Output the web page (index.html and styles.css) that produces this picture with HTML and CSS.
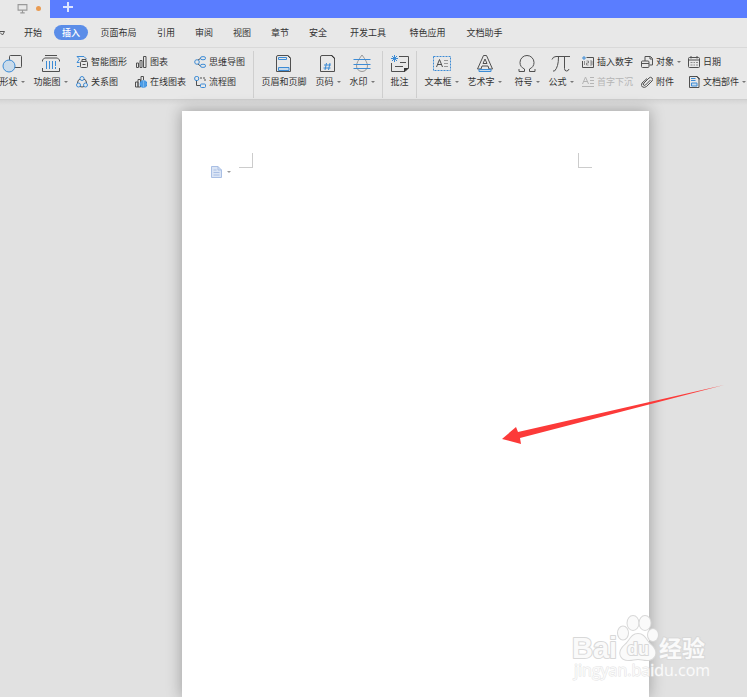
FILE: index.html
```html
<!DOCTYPE html>
<html lang="zh-CN">
<head>
<meta charset="utf-8">
<title>文档</title>
<meta name="viewport" content="width=device-width, initial-scale=1">
<link rel="stylesheet" href="styles.css">
</head>
<body>
<div class="app">
  <header class="titlebar">
    <div class="tab">
      <svg class="tab-icon" viewBox="0 0 10 10"><path class="k" d="M1 1.5h8v5H1zM5 6.5v2M3 9h4"/></svg>
      <span class="unsaved"></span>
    </div>
    <button class="new-tab" aria-label="新建"><svg viewBox="0 0 10 10"><path d="M5 0v10M0 5h10"/></svg></button>
  </header>

  <nav class="menu">
    <button class="menu-more" aria-label="更多"><svg viewBox="0 0 6 6"><path d="M0 1.500h4.500L2.500 5 0 2.500"/></svg></button>
    <a href="#">开始</a>
    <a href="#" class="active"><span>插入</span></a>
    <a href="#" class="long">页面布局</a>
    <a href="#">引用</a>
    <a href="#">审阅</a>
    <a href="#">视图</a>
    <a href="#">章节</a>
    <a href="#">安全</a>
    <a href="#" class="wide">开发工具</a>
    <a href="#" class="long">特色应用</a>
    <a href="#" class="long">文档助手</a>
  </nav>

  <div class="ribbon">
    <button class="big two">
      <svg viewBox="0 0 20 20"><rect class="k" x="7.500" y="1.500" width="12" height="12" rx="1"/><circle class="b tint" cx="7" cy="12" r="6"/></svg>
      <span class="label caret">形状</span>
    </button>
    <button class="big three">
      <svg viewBox="0 0 20 20"><path class="k" d="M4 1.500h12M1.500 7.500V6l2-2h13l2 2v1.500M1.500 14v3.500h17V14"/><path class="b" d="M5.500 7v8M8.500 7v8M11.500 7v8M14.500 7v5M14.500 13v2"/></svg>
      <span class="label caret">功能图</span>
    </button>
    <div class="grid">
      <button class="small"><svg viewBox="0 0 12 12"><path class="b" d="M1 .500h7l2.500 2.500M1 .500 3.500 3 1 6.500h2.500M1 10.500h2.500"/><rect class="k" x="4.500" y="5.500" width="7" height="6" rx="1"/><path class="k" d="M6 5V3.500h4V5M6.500 8.500h3"/></svg>智能图形</button>
      <button class="small"><svg viewBox="0 0 12 12"><path class="k" d="M1.500 7h2v4.500h-2zM5 4.500h2v7H5zM8.500 .500h2.500v11H8.500z"/></svg>图表</button>
      <button class="small"><svg viewBox="0 0 12 12"><path class="k" d="M4 4 6.500 2.500M4 8l2.500 2"/><circle class="b" cx="3" cy="6" r="2.300"/><rect class="b" x="6.500" y=".700" width="5" height="3" rx="1.500"/><rect class="b" x="6.500" y="8.300" width="5" height="3" rx="1.500"/></svg>思维导图</button>
      <button class="small"><svg viewBox="0 0 12 12"><path class="k" d="M4 3Q1.500 4 1.500 7M8 3q2.500 1 2.500 4M4 10.500q2 1 4 0"/><circle class="b" cx="6" cy="2.500" r="2"/><circle class="b" cx="2.500" cy="9" r="2"/><circle class="b" cx="9.500" cy="9" r="2"/></svg>关系图</button>
      <button class="small"><svg viewBox="0 0 12 12"><path class="k" d="M.500 6h2.500v5H.500zM3 3.500h2.500V11H3zM6 5V.500h2.500V4"/><circle class="solid" cx="8.500" cy="8" r="3.800"/><path class="light" d="M5 8h7M8.500 4.500v7M6 6h5M6 10h5"/></svg>在线图表</button>
      <button class="small"><svg viewBox="0 0 12 12"><path class="k dash" d="M6 2h5v4"/><path class="k" d="M2.500 4v5.500H6"/><rect class="b" x=".700" y=".500" width="4" height="4" rx="1.500"/><rect class="b" x="6.500" y="8" width="5" height="3.500" rx="1"/></svg>流程图</button>
    </div>
    <span class="sep"></span>
    <button class="big five">
      <svg viewBox="0 0 20 20"><path class="k" d="M2.500 3q0-1.500 1.500-1.500h9.500l3 3v13h-14z"/><path class="dark" d="M13 1h1l3 3v1z"/><path class="b" d="M4.500 3.500h8v2h-8z"/><path class="b tint" d="M4.500 13.500h10.500v3H4.500z"/></svg>
      <span class="label">页眉和页脚</span>
    </button>
    <button class="big two">
      <svg viewBox="0 0 20 20"><path class="k" d="M2.500 3q0-1.500 1.500-1.500h9.500l3 3v13h-14z"/><path class="dark" d="M12.500 1H14l3 3v1.500z"/><path class="b" d="m8.500 9-1.500 7M12 9l-1.500 7M6 11h7M5.500 14h7"/></svg>
      <span class="label caret">页码</span>
    </button>
    <button class="big two">
      <svg viewBox="0 0 20 20"><path class="g" d="M10 1Q4.500 8 4.500 12a5.500 5.500 0 0 0 11 0Q15.500 8 10 1z"/><path class="b" d="M1.500 5.500h17M1.500 10.500h17M1.500 14.500h17"/></svg>
      <span class="label caret">水印</span>
    </button>
    <span class="sep"></span>
    <button class="big">
      <svg viewBox="0 0 20 20"><path class="k" d="M9 2.500h9.500V14l-3.500 3.500H1.500V9M10 8.500h6M5 12.500h8"/><path class="dark" d="M14 18v-4h5z"/><path class="b" d="M4.500 1v7M1 4.500h7M2 2l5 5M7 2 2 7"/></svg>
      <span class="label">批注</span>
    </button>
    <span class="sep"></span>
    <button class="big three">
      <svg viewBox="0 0 20 20"><rect class="b dash" x="1.500" y="2.500" width="17" height="14"/><path class="k" d="m4.500 13 3-7.500 3 7.500M5.500 10.500h4"/><path class="g" d="M12 6.500h4M12 9.500h4M12 12.500h4"/></svg>
      <span class="label caret">文本框</span>
    </button>
    <button class="big three">
      <svg viewBox="0 0 20 20"><path class="k" d="M8.500 1.500h3L17.500 15h-3.500l-1-3H7l-1 3H2.500zM10 5l-2 4.500h4z"/><path class="b tint" d="M4 15.500h12v2H4z"/></svg>
      <span class="label caret">艺术字</span>
    </button>
    <button class="big two symbol">
      <svg viewBox="0 0 20 20"><path class="k" d="M2 17.500h5.500V15Q3 13 3 8.500a7 7 0 0 1 14 0Q17 13 12.500 15v2.500H18M2 17.500V15M18 17.500V15"/></svg>
      <span class="label caret">符号</span>
    </button>
    <button class="big two">
      <svg viewBox="0 0 20 20"><path class="k" d="M1 5.500Q2 2.500 5 2.500h14M7.500 3q0 10-4 14H2M13.500 3v11.500q0 2.500 2 2.500t2.500-2"/></svg>
      <span class="label caret">公式</span>
    </button>
    <div class="grid last">
      <button class="small"><svg viewBox="0 0 12 12"><path class="k" d="M4.500 1.500h7v10H.500V5"/><path class="b" d="M2 0v4M0 2h4"/><path class="k thin" d="M2.500 5v4M4.500 5h2v2h-2v2h2M8 5h2v4H8M8 7h2"/></svg>插入数字</button>
      <button class="small"><svg viewBox="0 0 12 12"><path class="k" d="M4 5V.500h5.500l2 2V9H8.500M9 1v2h2"/><rect class="k" x=".500" y="5" width="7.500" height="6.500" rx="1"/><path class="k" d="M.500 7.500H8"/></svg><span class="caret">对象</span></button>
      <button class="small"><svg viewBox="0 0 12 12"><rect class="k" x=".500" y="1.500" width="11" height="10" rx="1"/><path class="k" d="M.500 4h11M3 0v2.500M9 0v2.500"/><path class="k thin" d="M2.500 6.500h2M5.500 6.500h1.500M8 6.500h2M2.500 9h2M5.500 9h1.500M8 9h2"/></svg>日期</button>
      <button class="small" disabled><svg viewBox="0 0 12 12"><path class="g" d="m.500 8 3-7 3 7M1.500 5.500h4M8 1.500h4M8 4.500h4M8 7.500h4M0 10.500h12"/></svg>首字下沉</button>
      <button class="small"><svg viewBox="0 0 12 12"><path class="k" d="m9.500 4-5 5q-1.500 1-2 0t.500-2L8 2q1.500-1.500 3 0t0 3l-5.500 5.500q-2 1.500-4 .500t-.500-4L6 2.500"/></svg>附件</button>
      <button class="small"><svg viewBox="0 0 12 12"><path class="k" d="M1.500 .500H9l2 2v9H1.500z"/><path class="dark" d="M8 0h1l2.500 2.500V4z"/><path class="b" d="M3 2.500h4.500M3 4.500h4.500"/><path class="b tint" d="M3.500 7h5.500v3H3.500z"/></svg><span class="caret">文档部件</span></button>
    </div>
  </div>

  <main class="workspace">
    <section class="page">
      <div class="page-top">
        <button class="paste" aria-label="粘贴选项"><svg viewBox="0 0 11 12"><path d="M.500 .500H7l3.500 3.500v7.500H.500z"/><path class="fold" d="M7 .500V4h3.500M2.500 4h3M2.500 6.500h6M2.500 9h6"/></svg></button>
        <span class="mark start"></span>
        <span class="mark end"></span>
      </div>
      <svg class="arrow" viewBox="0 0 222 60"><path d="M0 54 14 42l2 5L222 0 18 53l1 6z"/></svg>
    </section>
    <svg class="watermark" viewBox="0 0 150 80">
      <g class="paw">
        <ellipse cx="54" cy="24" rx="5" ry="6.500"/><ellipse cx="64" cy="14" rx="5.500" ry="7"/><ellipse cx="76" cy="14" rx="5.500" ry="7"/><ellipse cx="84" cy="26" rx="5" ry="6"/>
        <path d="M69 25c7 0 8 7 13 11 8 7 4 15-4 15-4 0-5-1-9-1s-5 1-9 1c-9 0-12-8-4-15 5-4 6-11 13-11z"/>
      </g>
      <text class="logo" x="3" y="49">Bai</text>
      <text class="du" x="58" y="46">du</text>
      <text class="cn" x="90" y="48">经验</text>
      <text class="url" x="5" y="67">jingyan.baidu.com</text>
    </svg>
  </main>
</div>
</body>
</html>
```

FILE: styles.css
```css
* { box-sizing: border-box; }
body {
  margin: 0;
  font: 9px/12px "Noto Sans CJK SC", sans-serif;
  color: #333;
  background: #e1e1e1;
}
button {
  padding: 0;
  border: 0;
  background: none;
  font: inherit;
  color: inherit;
}
svg { display: block; fill: none; }
.app { display: flex; flex-direction: column; min-height: 100vh; overflow: hidden; }

.titlebar { display: flex; height: 18px; background: #5a7dff; }
.tab { display: flex; align-items: center; gap: 8px; width: 50px; padding: 0 0 2px 17px; background: #e8e8e8; }
.tab-icon { width: 11px; height: 11px; }
.tab-icon .k { stroke: #999; }
.unsaved { width: 5px; height: 5px; border-radius: 50%; background: #e99b52; }
.new-tab { padding: 0 13px 4px; }
.new-tab svg { width: 10px; height: 10px; stroke: #dce4ff; stroke-width: 2; }

.menu { display: flex; align-items: center; height: 30px; border-bottom: 1px solid #d9d9d9; background: #e8e8e8; }
.menu-more { width: 14px; }
.menu-more svg { width: 6px; height: 6px; stroke: #555; }
.menu a { width: 38px; color: inherit; text-align: center; text-decoration: none; white-space: nowrap; }
.menu .long { width: 57px; }
.menu .wide { width: 62px; }
.menu .active span { display: block; margin: 0 2px; border-radius: 8px; line-height: 15px; color: #fff; background: #5b8de8; font-weight: 500; }

.ribbon {
  display: flex;
  gap: 8px;
  height: 52px;
  margin-left: -1px;
  padding: 3px 0 1px;
  border-bottom: 1px solid #cfcfcf;
  background: #e8e8e8;
  white-space: nowrap;
}
.ribbon > * { flex: none; }
.big { display: flex; flex-direction: column; align-items: center; gap: 2px; width: 19px; padding-top: 3px; }
.big svg { width: 20px; height: 20px; }
.two { width: 26px; }
.three { width: 35px; }
.five { width: 46px; }
.symbol { margin-left: 4px; }
.sep { width: 1px; margin: 0 -1px; background: #cfcfcf; }
.caret { display: flex; align-items: center; gap: 3px; }
.caret::after { content: ""; border: 2px solid transparent; border-top-color: #777; border-bottom: 0; }
.grid { display: grid; grid-template-columns: repeat(3, 52px); gap: 8px 7px; align-content: start; padding-top: 5px; }
.last { grid-template-columns: 52px 40px 60px; }
.small { display: flex; align-items: center; gap: 3px; }
.small svg { width: 12px; height: 12px; }
.small:disabled { color: #b5b5b5; }

.k { stroke: #505050; }
.b { stroke: #3c8bd5; }
.g { stroke: #999; }
.small:disabled .g { stroke: #b5b5b5; }
.thin { stroke-width: 0.6; }
.dash { stroke-dasharray: 2 1; }
.tint { fill: #c9dbeb; }
.solid { fill: #2f8ae0; }
.light { stroke: #a9d0f5; stroke-width: 0.5; }
.dark { fill: #333; }

.workspace {
  position: relative;
  display: flex;
  flex: 1;
  padding: 11px 98px 0 182px;
  background: linear-gradient(#d5d5d5, #e1e1e1 5px);
}
.page { position: relative; flex: 1; background: #fff; box-shadow: 0 0 14px 1px rgba(0, 0, 0, 0.28); }
.page-top { display: flex; align-items: flex-start; padding: 42px 57px 0 29px; }
.paste { display: flex; align-items: center; gap: 5px; width: 28px; padding-top: 13px; }
.paste svg { width: 11px; height: 12px; fill: #dbe5f5; stroke: #a9bfe4; }
.paste .fold { fill: none; }
.paste::after { content: ""; border: 2px solid transparent; border-top-color: #999; border-bottom: 0; }
.mark { width: 14px; height: 15px; border-bottom: 1px solid #ccc; }
.start { border-right: 1px solid #ccc; }
.end { margin-left: auto; border-left: 1px solid #ccc; }
.arrow { position: absolute; top: 274px; left: 320px; width: 222px; height: 60px; fill: #fc3a39; }

.watermark {
  position: absolute;
  right: 28px;
  bottom: 8px;
  width: 150px;
  height: 80px;
  fill: #fafafa;
  stroke: #d8d8d8;
  stroke-width: 2;
  paint-order: stroke;
  stroke-linejoin: round;
}
.logo { font: 700 29px "Liberation Sans", sans-serif; }
.du { font: 700 18px "Liberation Sans", sans-serif; }
.cn { font: 700 23px "Noto Sans CJK SC", sans-serif; }
.url { font: 16px "Open Sans", sans-serif; stroke: #e4e4e4; stroke-width: 1; }
```
